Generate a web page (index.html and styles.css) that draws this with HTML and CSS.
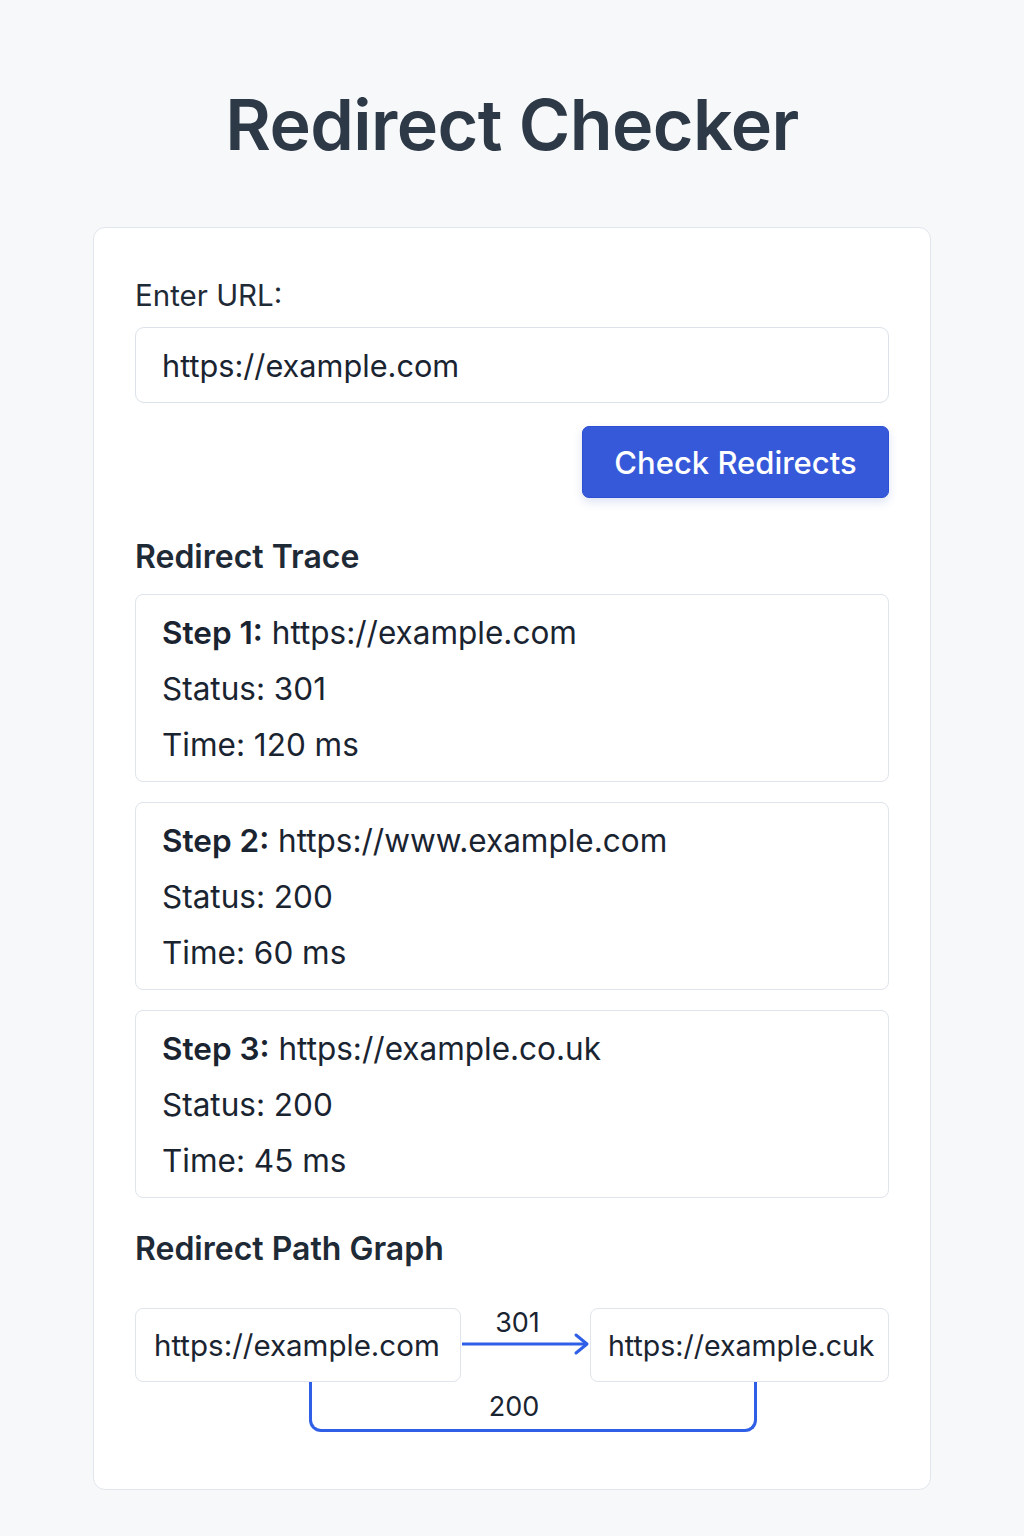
FILE: index.html
```html
<!DOCTYPE html>
<html lang="en">
<head>
<meta charset="utf-8">
<title>Redirect Checker</title>
<link rel="stylesheet" href="styles.css">
</head>
<body>
<div class="page">
  <h1 class="title">Redirect Checker</h1>
  <main class="card">
    <label class="label" for="url">Enter URL:</label>
    <div class="input" id="url">https://example.com</div>
    <div class="actions"><button class="btn">Check Redirects</button></div>

    <h2 class="section">Redirect Trace</h2>
    <div class="steps">
      <div class="step">
        <div class="line"><b>Step 1:</b> https://example.com</div>
        <div class="line">Status: 301</div>
        <div class="line">Time: 120 ms</div>
      </div>
      <div class="step">
        <div class="line"><b>Step 2:</b> https://www.example.com</div>
        <div class="line">Status: 200</div>
        <div class="line">Time: 60 ms</div>
      </div>
      <div class="step">
        <div class="line"><b>Step 3:</b> https://example.co.uk</div>
        <div class="line">Status: 200</div>
        <div class="line">Time: 45 ms</div>
      </div>
    </div>

    <h2 class="section graph-title">Redirect Path Graph</h2>
    <div class="graph">
      <div class="graph-row">
        <div class="node node-a">https://example.com</div>
        <div class="edge">
          <span class="edge-label">301</span>
          <svg class="arrow" width="128" height="24" viewBox="0 0 128 24">
            <line x1="0" y1="12" x2="124" y2="12" stroke="#2f5fe6" stroke-width="3"/>
            <polyline points="114,3 125,12 114,21" fill="none" stroke="#2f5fe6" stroke-width="3" stroke-linecap="round" stroke-linejoin="round"/>
          </svg>
        </div>
        <div class="node node-b">https://example.cuk</div>
      </div>
      <div class="loop"><span class="loop-label">200</span></div>
    </div>
  </main>
</div>
</body>
</html>
```

FILE: styles.css
```css
* { box-sizing: border-box; }
html, body { margin: 0; padding: 0; }
body {
  background: #f7f8fa;
  font-family: Inter, "Noto Sans", "Liberation Sans", sans-serif;
  color: #1f2a37;
}
.page {
  width: 1024px;
  padding-top: 85px;
  padding-bottom: 48px;
}
.title {
  margin: 0 0 63px;
  text-align: center;
  font-size: 70px;
  line-height: 79px;
  font-weight: 600;
  color: #2d3946;
  letter-spacing: -0.6px;
}
.card {
  margin: 0 93px;
  background: #fff;
  border: 1px solid #e1e6ec;
  border-radius: 12px;
  padding: 50px 41px 57px;
  display: flex;
  flex-direction: column;
}
.label {
  font-size: 29.5px;
  line-height: 34px;
  color: #1f2a37;
  margin-bottom: 15px;
}
.input {
  height: 76px;
  border: 1.5px solid #dbe2e9;
  border-radius: 9px;
  padding: 0 26px;
  display: flex;
  align-items: center;
  font-size: 30.7px;
  color: #1a2431;
}
.actions {
  display: flex;
  justify-content: flex-end;
  margin-top: 23px;
}
.btn {
  width: 307px;
  height: 72px;
  background: #3559d9;
  border: 1.5px solid #2c4fd3;
  border-radius: 7px;
  color: #fff;
  font-family: inherit;
  font-size: 31px;
  font-weight: 500;
  box-shadow: 0 4px 10px rgba(40, 70, 180, 0.15);
  padding: 0;
}
.section {
  margin: 40px 0 18px;
  font-size: 32px;
  line-height: 38px;
  font-weight: 600;
  color: #1f2a37;
}
.steps {
  display: flex;
  flex-direction: column;
  gap: 20px;
}
.step {
  border: 1px solid #dfe5eb;
  border-radius: 8px;
  padding: 10px 26px 8px;
}
.line {
  font-size: 31.5px;
  line-height: 56px;
  color: #1a2431;
}
.line b { font-weight: 600; }
.graph-title { margin-top: 32px; margin-bottom: 40px; }
.graph {
  display: flex;
  flex-direction: column;
}
.graph-row {
  display: flex;
  align-items: stretch;
}
.node {
  height: 74px;
  border: 1.5px solid #dfe5eb;
  border-radius: 8px;
  display: flex;
  align-items: center;
  color: #1a2431;
  white-space: nowrap;
}
.node-a { width: 326px; padding-left: 18px; font-size: 29.5px; }
.node-b { width: 299px; padding-left: 17px; font-size: 28.5px; }
.edge {
  flex: 1;
  display: flex;
  flex-direction: column;
  align-items: center;
  justify-content: flex-start;
}
.edge-label {
  font-size: 27px;
  line-height: 32px;
  margin-top: -1px;
  margin-right: 16px;
  color: #1a2431;
}
.arrow { display: block; margin-top: -7px; }
.loop {
  margin-left: 174px;
  width: 448px;
  height: 50px;
  border: 3px solid #2f5fe6;
  border-top: none;
  border-radius: 0 0 12px 12px;
  display: flex;
  justify-content: center;
  align-items: center;
}
.loop-label {
  font-size: 27px;
  line-height: 32px;
  color: #1a2431;
  margin-top: 2px;
  margin-right: 38px;
}
```
